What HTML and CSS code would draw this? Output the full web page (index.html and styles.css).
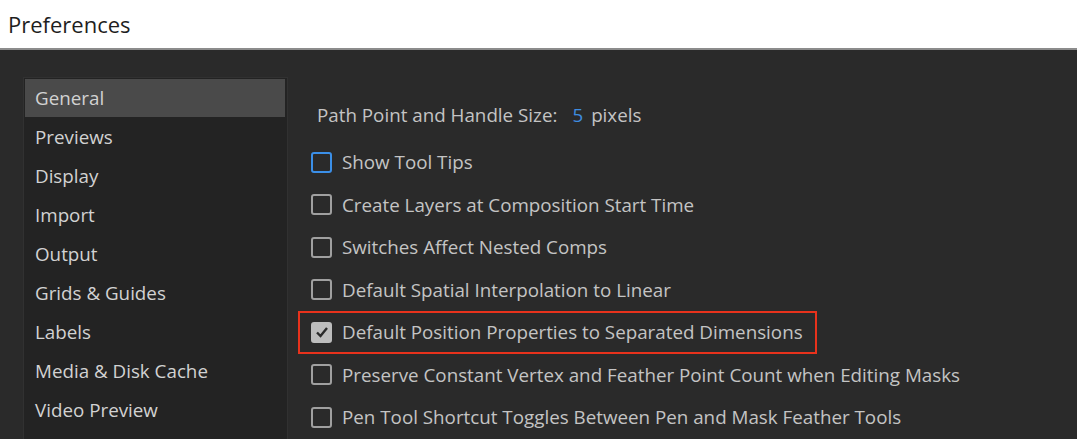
FILE: index.html
```html
<!DOCTYPE html>
<html>
<head>
<meta charset="utf-8">
<link rel="stylesheet" href="styles.css">
</head>
<body>
<header class="titlebar">Preferences</header>
<main class="main">
  <nav class="sidebar">
    <div class="nav-item selected">General</div>
    <div class="nav-item">Previews</div>
    <div class="nav-item">Display</div>
    <div class="nav-item">Import</div>
    <div class="nav-item">Output</div>
    <div class="nav-item">Grids &amp; Guides</div>
    <div class="nav-item">Labels</div>
    <div class="nav-item">Media &amp; Disk Cache</div>
    <div class="nav-item">Video Preview</div>
  </nav>
  <section class="content">
    <div class="path-row">Path Point and Handle Size:<span class="num">5</span>pixels</div>
    <div class="row"><span class="cb focus"></span>Show Tool Tips</div>
    <div class="row"><span class="cb"></span>Create Layers at Composition Start Time</div>
    <div class="row"><span class="cb"></span>Switches Affect Nested Comps</div>
    <div class="row"><span class="cb"></span>Default Spatial Interpolation to Linear</div>
    <div class="row highlight"><span class="cb checked"><svg width="16" height="16" viewBox="0 0 16 16"><polyline points="3,8.5 6.5,12 13,4" fill="none" stroke="#2a2a2a" stroke-width="2.4"/></svg></span>Default Position Properties to Separated Dimensions</div>
    <div class="row"><span class="cb"></span>Preserve Constant Vertex and Feather Point Count when Editing Masks</div>
    <div class="row"><span class="cb"></span>Pen Tool Shortcut Toggles Between Pen and Mask Feather Tools</div>
  </section>
</main>
</body>
</html>
```

FILE: styles.css
```css
* { box-sizing: border-box; }
html, body { margin: 0; padding: 0; }
body {
  background: #2a2a2a;
  font-family: "Open Sans", "Noto Sans", sans-serif;
  height: 439px;
  overflow: hidden;
}
.titlebar {
  height: 50px;
  background: #ffffff;
  color: #1e1e1e;
  font-size: 22px;
  padding-left: 8px;
  line-height: 48px;
  border-bottom: 2px solid #8c8c8c;
}
.main {
  display: flex;
  padding: 27px 0 0 23px;
}
.sidebar {
  width: 265px;
  height: 370px;
  background: #232323;
  border: 1px solid #313131;
  border-bottom: none;
  padding: 1px 2px 0 1px;
  display: flex;
  flex-direction: column;
}
.nav-item {
  height: 39px;
  line-height: 39px;
  padding-left: 10px;
  color: #d2d2d2;
  font-size: 18.8px;
}
.nav-item.selected {
  background: #4a4a4a;
  height: 38px;
  line-height: 38px;
  margin-bottom: 1px;
}
.content {
  padding-left: 10px;
  display: flex;
  flex-direction: column;
  color: #c4c4c4;
  font-size: 18.8px;
}
.path-row {
  height: 64px;
  line-height: 24px;
  padding: 26px 0 0 19px;
}
.num {
  color: #3e8de0;
  margin: 0 8px 0 15px;
}
.row {
  height: 42.5px;
  display: flex;
  align-items: center;
  padding-left: 13px;
  width: max-content;
  padding-right: 14px;
}
.row.highlight {
  border: 2px solid #e8321c;
  padding-left: 11px;
  padding-right: 12px;
}
.cb {
  width: 21px;
  height: 21px;
  border: 2px solid #a0a0a0;
  border-radius: 3px;
  margin-right: 10px;
  flex: none;
  display: flex;
  align-items: center;
  justify-content: center;
}
.cb.focus { border-color: #3b8fe8; }
.cb.checked {
  background: #bdbdbd;
  border-color: #bdbdbd;
}
```
